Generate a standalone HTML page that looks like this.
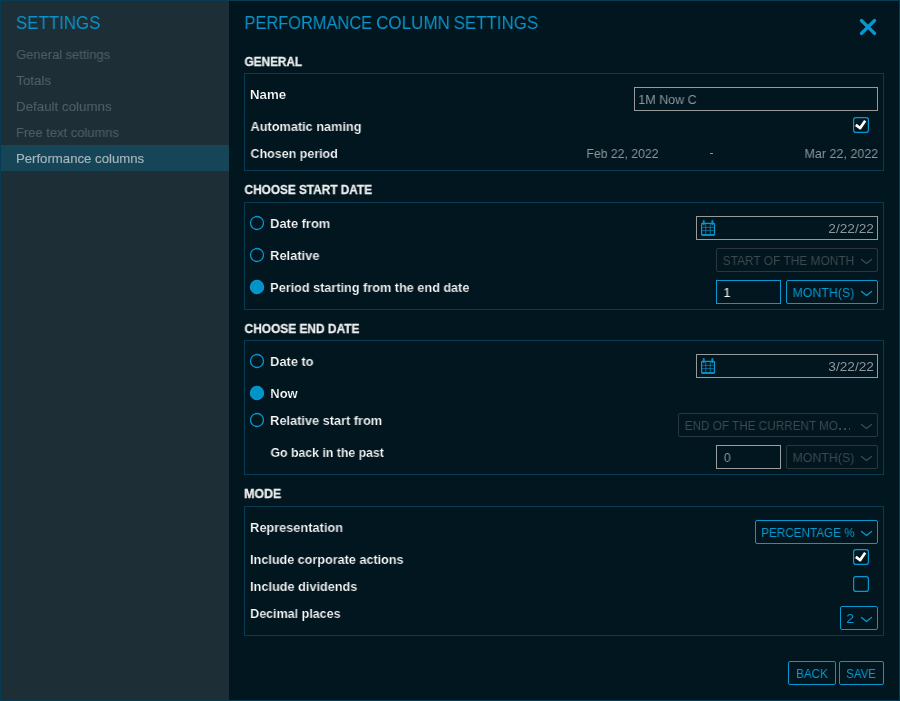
<!DOCTYPE html>
<html><head><meta charset="utf-8"><title>Performance column settings</title>
<style>
html,body{margin:0;padding:0;background:#02161f;}
body{width:900px;height:701px;position:relative;overflow:hidden;font-family:"Liberation Sans",sans-serif;}
#frame{position:absolute;left:0;top:0;width:898px;height:699px;border:1px solid #063c52;z-index:5;pointer-events:none}
#side{position:absolute;left:0;top:0;width:229px;height:701px;background:#1e2e37}
#sel{position:absolute;left:0;top:145px;width:229px;height:26px;background:#164557}
.t{position:absolute;white-space:nowrap;line-height:normal;transform-origin:0 0;will-change:transform;font-family:"Liberation Sans",sans-serif;}
</style></head><body>
<div id="side"></div><div id="sel"></div>

<div style="position:absolute;left:244px;top:73px;width:638px;height:96px;border:1px solid #073c53;border-radius:0px"></div>
<div style="position:absolute;left:244px;top:202px;width:638px;height:106px;border:1px solid #073c53;border-radius:0px"></div>
<div style="position:absolute;left:244px;top:340px;width:638px;height:133px;border:1px solid #073c53;border-radius:0px"></div>
<div style="position:absolute;left:244px;top:506px;width:638px;height:128px;border:1px solid #073c53;border-radius:0px"></div>
<div style="position:absolute;left:634px;top:87px;width:242px;height:22px;border:1px solid #989a9a;border-radius:0px"></div>
<div style="position:absolute;left:696px;top:216px;width:180px;height:22px;border:1px solid #989a9a;border-radius:0px"></div>
<div style="position:absolute;left:696px;top:354px;width:180px;height:22px;border:1px solid #989a9a;border-radius:0px"></div>
<div style="position:absolute;left:716px;top:280px;width:63px;height:22px;border:1px solid #0698ce;border-radius:0px"></div>
<div style="position:absolute;left:716px;top:445px;width:63px;height:22px;border:1px solid #9c9e9e;border-radius:0px"></div>
<div style="position:absolute;left:716px;top:248px;width:160px;height:22px;border:1px solid #2b373d;border-radius:2px"></div>
<div style="position:absolute;left:786px;top:280px;width:90px;height:22px;border:1px solid #0698ce;border-radius:2px"></div>
<div style="position:absolute;left:678px;top:413px;width:198px;height:22px;border:1px solid #2b373d;border-radius:2px"></div>
<div style="position:absolute;left:786px;top:445px;width:90px;height:22px;border:1px solid #2b373d;border-radius:2px"></div>
<div style="position:absolute;left:755px;top:520px;width:121px;height:22px;border:1px solid #0698ce;border-radius:2px"></div>
<div style="position:absolute;left:840px;top:606px;width:36px;height:22px;border:1px solid #0698ce;border-radius:2px"></div>
<div style="position:absolute;left:788px;top:661px;width:46px;height:22px;border:1px solid #0698ce;border-radius:2px"></div>
<div style="position:absolute;left:839px;top:661px;width:43px;height:22px;border:1px solid #0698ce;border-radius:2px"></div>
<svg style="position:absolute;left:860px;top:258px" width="14" height="8" viewBox="0 0 14 8"><path d="M1.5,1.5 L6.5,5.55 L11.5,1.5" fill="none" stroke="#3d494f" stroke-width="1.25" stroke-linecap="round" stroke-linejoin="round"/></svg>
<svg style="position:absolute;left:860px;top:290px" width="14" height="8" viewBox="0 0 14 8"><path d="M1.5,1.5 L6.5,5.55 L11.5,1.5" fill="none" stroke="#0698ce" stroke-width="1.25" stroke-linecap="round" stroke-linejoin="round"/></svg>
<svg style="position:absolute;left:860px;top:423px" width="14" height="8" viewBox="0 0 14 8"><path d="M1.5,1.5 L6.5,5.55 L11.5,1.5" fill="none" stroke="#3d494f" stroke-width="1.25" stroke-linecap="round" stroke-linejoin="round"/></svg>
<svg style="position:absolute;left:860px;top:455px" width="14" height="8" viewBox="0 0 14 8"><path d="M1.5,1.5 L6.5,5.55 L11.5,1.5" fill="none" stroke="#3d494f" stroke-width="1.25" stroke-linecap="round" stroke-linejoin="round"/></svg>
<svg style="position:absolute;left:860px;top:530px" width="14" height="8" viewBox="0 0 14 8"><path d="M1.5,1.5 L6.5,5.55 L11.5,1.5" fill="none" stroke="#0698ce" stroke-width="1.25" stroke-linecap="round" stroke-linejoin="round"/></svg>
<svg style="position:absolute;left:860px;top:616px" width="14" height="8" viewBox="0 0 14 8"><path d="M1.5,1.5 L6.5,5.55 L11.5,1.5" fill="none" stroke="#0698ce" stroke-width="1.25" stroke-linecap="round" stroke-linejoin="round"/></svg>
<svg style="position:absolute;left:701px;top:220px" width="16" height="17" viewBox="0 0 16 17"><g fill="none" stroke="#0698ce"><rect x="0.6" y="3.45" width="12.9" height="11.6" rx="0.8" stroke-width="1.2"/><path d="M0.6,14.9 H13.5" stroke-width="1.5"/><path d="M4.7,4 V14.4 M9.2,4 V14.4" stroke-width="1.1" opacity="0.62"/><path d="M1,7.4 H13 M1,10.6 H13" stroke-width="1" opacity="0.62"/><path d="M2.7,1.1 V4.3 M11.4,1.1 V4.3" stroke-width="2" stroke-linecap="round" opacity="0.9"/></g></svg>
<svg style="position:absolute;left:701px;top:358px" width="16" height="17" viewBox="0 0 16 17"><g fill="none" stroke="#0698ce"><rect x="0.6" y="3.45" width="12.9" height="11.6" rx="0.8" stroke-width="1.2"/><path d="M0.6,14.9 H13.5" stroke-width="1.5"/><path d="M4.7,4 V14.4 M9.2,4 V14.4" stroke-width="1.1" opacity="0.62"/><path d="M1,7.4 H13 M1,10.6 H13" stroke-width="1" opacity="0.62"/><path d="M2.7,1.1 V4.3 M11.4,1.1 V4.3" stroke-width="2" stroke-linecap="round" opacity="0.9"/></g></svg>
<svg style="position:absolute;left:853px;top:117px" width="16" height="16" viewBox="0 0 16 16"><rect x="0.6" y="0.6" width="14.8" height="14.8" rx="2.2" fill="none" stroke="#0698ce" stroke-width="1.2"/><path d="M2.8,7.8 L7.2,11.1 L12.2,3.8" fill="none" stroke="#fff" stroke-width="2.7" stroke-linecap="butt" stroke-linejoin="round"/></svg>
<svg style="position:absolute;left:853px;top:549px" width="16" height="16" viewBox="0 0 16 16"><rect x="0.6" y="0.6" width="14.8" height="14.8" rx="2.2" fill="none" stroke="#0698ce" stroke-width="1.2"/><path d="M2.8,7.8 L7.2,11.1 L12.2,3.8" fill="none" stroke="#fff" stroke-width="2.7" stroke-linecap="butt" stroke-linejoin="round"/></svg>
<svg style="position:absolute;left:853px;top:576px" width="16" height="16" viewBox="0 0 16 16"><rect x="0.6" y="0.6" width="14.8" height="14.8" rx="2.2" fill="none" stroke="#0698ce" stroke-width="1.2"/></svg>
<svg style="position:absolute;left:249px;top:215px" width="16" height="16" viewBox="0 0 16 16"><circle cx="8" cy="8" r="6.5" fill="none" stroke="#0698ce" stroke-width="1.3"/></svg>
<svg style="position:absolute;left:249px;top:247px" width="16" height="16" viewBox="0 0 16 16"><circle cx="8" cy="8" r="6.5" fill="none" stroke="#0698ce" stroke-width="1.3"/></svg>
<svg style="position:absolute;left:249px;top:279px" width="16" height="16" viewBox="0 0 16 16"><circle cx="8" cy="8" r="6.55" fill="#0093c8" stroke="#0698ce" stroke-width="1.3"/></svg>
<svg style="position:absolute;left:249px;top:353px" width="16" height="16" viewBox="0 0 16 16"><circle cx="8" cy="8" r="6.5" fill="none" stroke="#0698ce" stroke-width="1.3"/></svg>
<svg style="position:absolute;left:249px;top:385px" width="16" height="16" viewBox="0 0 16 16"><circle cx="8" cy="8" r="6.55" fill="#0093c8" stroke="#0698ce" stroke-width="1.3"/></svg>
<svg style="position:absolute;left:249px;top:412px" width="16" height="16" viewBox="0 0 16 16"><circle cx="8" cy="8" r="6.5" fill="none" stroke="#0698ce" stroke-width="1.3"/></svg>
<div style="position:absolute;left:709.7px;top:153.4px;width:3.6px;height:1.1px;background:#8d969b"></div>
<div style="position:absolute;left:839.1px;top:428.3px;width:1.7px;height:1.7px;background:#3d494f"></div>
<div style="position:absolute;left:844.0px;top:428.3px;width:1.7px;height:1.7px;background:#3d494f"></div>
<div style="position:absolute;left:848.7px;top:428.3px;width:1.7px;height:1.7px;background:#3d494f"></div>
<svg style="position:absolute;left:858px;top:17px" width="20" height="20" viewBox="0 0 20 20"><path d="M3.4,3.5 L16.6,16.5 M16.6,3.5 L3.4,16.5" stroke="#0698ce" stroke-width="3.2" stroke-linecap="round" fill="none"/></svg>
<span class="t" style="left:15px;top:11.75px;font-size:18.5px;font-weight:400;color:#0a93c9;transform:translateX(0.90px) scaleX(0.9127)">SETTINGS</span>
<span class="t" style="-webkit-text-stroke:0.15px #4c5d66;left:16px;top:47.00px;font-size:13px;font-weight:400;color:#4c5d66;transform:translateX(0.31px) scaleX(0.9898)">General settings</span>
<span class="t" style="-webkit-text-stroke:0.15px #4c5d66;left:16px;top:73.00px;font-size:13px;font-weight:400;color:#4c5d66;transform:translateX(0.19px) scaleX(1.0312)">Totals</span>
<span class="t" style="-webkit-text-stroke:0.15px #4c5d66;left:16px;top:99.00px;font-size:13px;font-weight:400;color:#4c5d66;transform:translateX(0.02px) scaleX(1.0263)">Default columns</span>
<span class="t" style="-webkit-text-stroke:0.15px #4c5d66;left:15px;top:125.00px;font-size:13px;font-weight:400;color:#4c5d66;transform:translateX(0.93px) scaleX(0.9970)">Free text columns</span>
<span class="t" style="-webkit-text-stroke:0.15px #a7b6bd;left:15px;top:151.00px;font-size:13px;font-weight:400;color:#a7b6bd;transform:translateX(0.91px) scaleX(1.0144)">Performance columns</span>
<span class="t" style="left:244px;top:11.75px;font-size:18.5px;font-weight:400;color:#0a93c9;transform:translateX(0.50px) scaleX(0.8866)">PERFORMANCE</span>
<span class="t" style="left:376px;top:11.75px;font-size:18.5px;font-weight:400;color:#0a93c9;transform:translateX(0.15px) scaleX(0.9187)">COLUMN</span>
<span class="t" style="left:453px;top:11.75px;font-size:18.5px;font-weight:400;color:#0a93c9;transform:translateX(0.63px) scaleX(0.9129)">SETTINGS</span>
<span class="t" style="-webkit-text-stroke:0.3px #eceeef;left:244px;top:54.00px;font-size:13px;font-weight:700;color:#eceeef;transform:translateX(0.54px) scaleX(0.9063)">GENERAL</span>
<span class="t" style="-webkit-text-stroke:0.2px #02161f;left:249px;top:87.00px;font-size:13px;font-weight:700;color:#ffffff;transform:translateX(0.95px) scaleX(1.0218)">Name</span>
<span class="t" style="left:638px;top:92.00px;font-size:13px;font-weight:400;color:#8d969b;transform:translateX(0.31px) scaleX(0.9621)">1M Now C</span>
<span class="t" style="-webkit-text-stroke:0.2px #02161f;left:250px;top:119.00px;font-size:13px;font-weight:700;color:#ffffff;transform:translateX(0.54px) scaleX(0.9782)">Automatic naming</span>
<span class="t" style="-webkit-text-stroke:0.2px #02161f;left:250px;top:146.00px;font-size:13px;font-weight:700;color:#ffffff;transform:translateX(0.51px) scaleX(0.9596)">Chosen period</span>
<span class="t" style="left:586px;top:146.00px;font-size:13px;font-weight:400;color:#8d969b;transform:translateX(0.41px) scaleX(0.9399)">Feb 22, 2022</span>
<span class="t" style="left:804px;top:146.00px;font-size:13px;font-weight:400;color:#8d969b;transform:translateX(0.49px) scaleX(0.9620)">Mar 22, 2022</span>
<span class="t" style="-webkit-text-stroke:0.3px #eceeef;left:244px;top:182.00px;font-size:13px;font-weight:700;color:#eceeef;transform:translateX(0.51px) scaleX(0.9085)">CHOOSE START DATE</span>
<span class="t" style="-webkit-text-stroke:0.2px #02161f;left:270px;top:216.00px;font-size:13px;font-weight:700;color:#ffffff;transform:translateX(0.15px) scaleX(0.9902)">Date from</span>
<span class="t" style="left:828px;top:221.00px;font-size:13px;font-weight:400;color:#8d969b;transform:translateX(0.32px) scaleX(1.0518)">2/22/22</span>
<span class="t" style="-webkit-text-stroke:0.2px #02161f;left:270px;top:248.00px;font-size:13px;font-weight:700;color:#ffffff;transform:translateX(0.15px) scaleX(0.9867)">Relative</span>
<span class="t" style="left:722px;top:253.00px;font-size:13px;font-weight:400;color:#3d494f;transform:translateX(0.66px) scaleX(0.9172)">START OF THE MONTH</span>
<span class="t" style="-webkit-text-stroke:0.2px #02161f;left:270px;top:280.00px;font-size:13px;font-weight:700;color:#ffffff;transform:translateX(0.19px) scaleX(0.9745)">Period starting from the end date</span>
<span class="t" style="left:723px;top:285.00px;font-size:13px;font-weight:400;color:#ffffff;transform:translateX(0.54px) scaleX(0.9590)">1</span>
<span class="t" style="left:792px;top:285.00px;font-size:13px;font-weight:400;color:#0698ce;transform:translateX(0.56px) scaleX(0.9491)">MONTH(S)</span>
<span class="t" style="-webkit-text-stroke:0.3px #eceeef;left:244px;top:321.00px;font-size:13px;font-weight:700;color:#eceeef;transform:translateX(0.52px) scaleX(0.9163)">CHOOSE END DATE</span>
<span class="t" style="-webkit-text-stroke:0.2px #02161f;left:270px;top:354.00px;font-size:13px;font-weight:700;color:#ffffff;transform:translateX(0.15px) scaleX(0.9854)">Date to</span>
<span class="t" style="left:828px;top:359.00px;font-size:13px;font-weight:400;color:#8d969b;transform:translateX(0.29px) scaleX(1.0512)">3/22/22</span>
<span class="t" style="-webkit-text-stroke:0.2px #02161f;left:270px;top:386.00px;font-size:13px;font-weight:700;color:#ffffff;transform:translateX(0.24px) scaleX(1.0004)">Now</span>
<span class="t" style="-webkit-text-stroke:0.2px #02161f;left:270px;top:413.00px;font-size:13px;font-weight:700;color:#ffffff;transform:translateX(0.15px) scaleX(0.9813)">Relative start from</span>
<span class="t" style="left:684px;top:418.00px;font-size:13px;font-weight:400;color:#3d494f;transform:translateX(0.71px) scaleX(0.9021)">END OF THE CURRENT MO</span>
<span class="t" style="-webkit-text-stroke:0.2px #02161f;left:270px;top:445.00px;font-size:13px;font-weight:700;color:#ffffff;transform:translateX(0.50px) scaleX(0.9460)">Go back in the past</span>
<span class="t" style="left:723px;top:449.50px;font-size:13px;font-weight:400;color:#8d969b;transform:translateX(0.87px) scaleX(0.9555)">0</span>
<span class="t" style="left:792px;top:450.00px;font-size:13px;font-weight:400;color:#3d494f;transform:translateX(0.56px) scaleX(0.9491)">MONTH(S)</span>
<span class="t" style="-webkit-text-stroke:0.3px #eceeef;left:244px;top:486.00px;font-size:13px;font-weight:700;color:#eceeef;transform:translateX(0.19px) scaleX(0.9500)">MODE</span>
<span class="t" style="-webkit-text-stroke:0.2px #02161f;left:250px;top:520.00px;font-size:13px;font-weight:700;color:#ffffff;transform:translateX(0.15px) scaleX(0.9806)">Representation</span>
<span class="t" style="left:761px;top:525.00px;font-size:13px;font-weight:400;color:#0698ce;transform:translateX(0.22px) scaleX(0.8994)">PERCENTAGE %</span>
<span class="t" style="-webkit-text-stroke:0.2px #02161f;left:250px;top:552.00px;font-size:13px;font-weight:700;color:#ffffff;transform:translateX(0.15px) scaleX(0.9694)">Include corporate actions</span>
<span class="t" style="-webkit-text-stroke:0.2px #02161f;left:250px;top:579.00px;font-size:13px;font-weight:700;color:#ffffff;transform:translateX(0.15px) scaleX(0.9761)">Include dividends</span>
<span class="t" style="-webkit-text-stroke:0.2px #02161f;left:250px;top:606.00px;font-size:13px;font-weight:700;color:#ffffff;transform:translateX(0.19px) scaleX(0.9612)">Decimal places</span>
<span class="t" style="left:846px;top:611.00px;font-size:13px;font-weight:400;color:#0698ce;transform:translateX(0.37px) scaleX(1.0911)">2</span>
<span class="t" style="left:796px;top:666.00px;font-size:13px;font-weight:400;color:#0698ce;transform:translateX(0.14px) scaleX(0.8963)">BACK</span>
<span class="t" style="left:846px;top:666.00px;font-size:13px;font-weight:400;color:#0698ce;transform:translateX(0.22px) scaleX(0.8805)">SAVE</span>
<div id="frame"></div>
</body></html>
